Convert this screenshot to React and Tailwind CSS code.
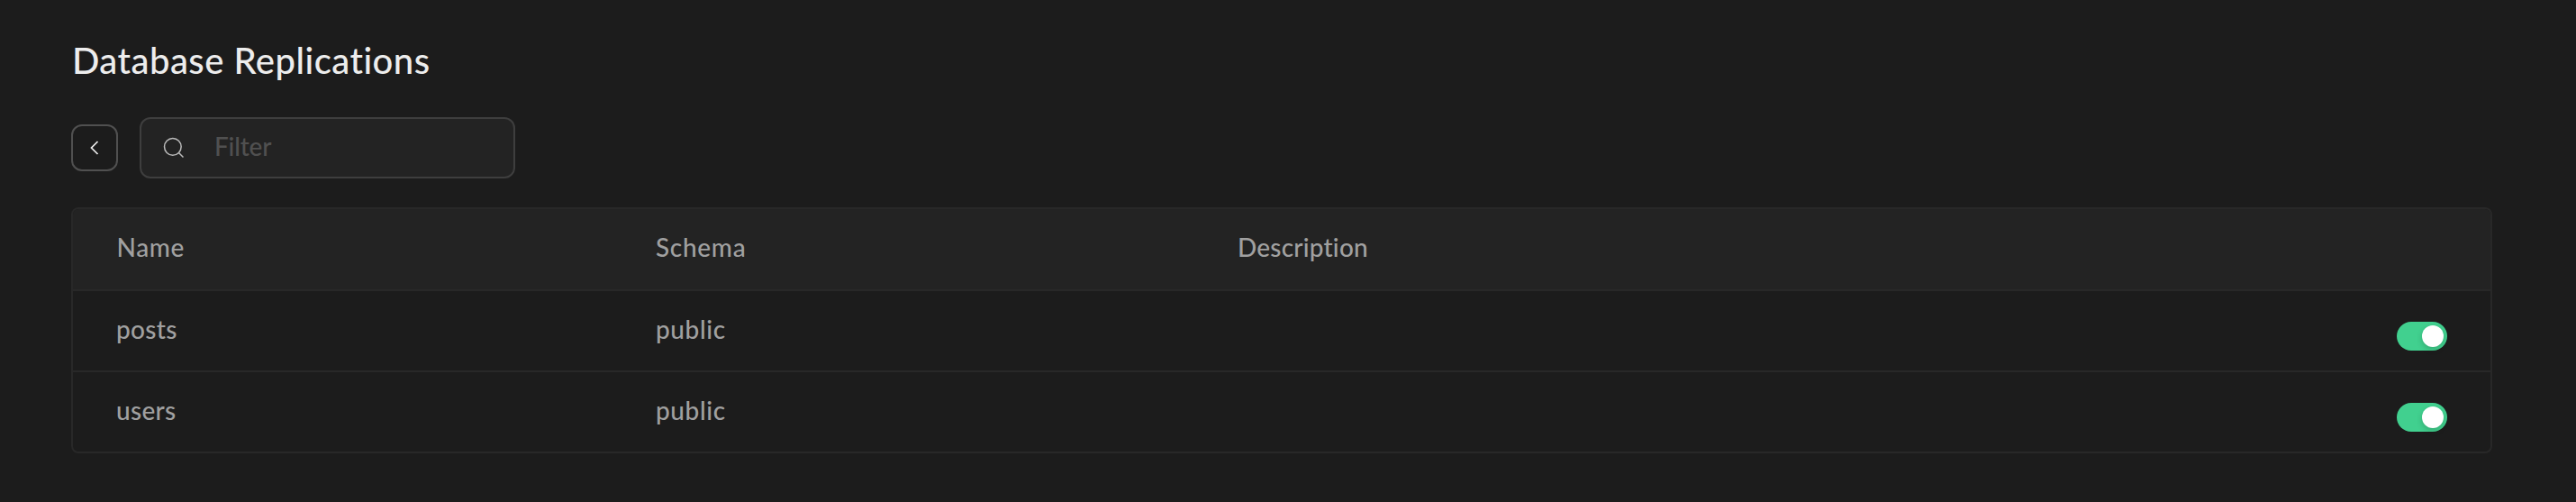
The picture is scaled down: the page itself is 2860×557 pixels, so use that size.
const rows = [
  { name: "posts", schema: "public" },
  { name: "users", schema: "public" },
];

const columns = "grid grid-cols-[598px_646px_1fr_56px] px-12";

function Toggle() {
  return (
    <button
      type="button"
      role="switch"
      aria-checked="true"
      className="mt-[34px] flex h-8 w-14 items-center justify-end rounded-full bg-[#41d08f] px-1"
    >
      <span className="size-6 rounded-full bg-white shadow-[0_3px_6px_rgba(0,35,11,0.2)]" />
    </button>
  );
}

export default function App() {
  return (
    <div className="h-[557px] w-full overflow-hidden bg-[#1c1c1c] pl-[79px] pr-[93px] pt-[43px] font-['Lato',sans-serif] font-medium text-[#a0a0a0]">
      <h3 className="h-12 pl-px text-[40px] leading-[48px] tracking-[0.47px] text-[#ededed]">
        Database Replications
      </h3>
      <div className="mt-[39px] flex h-[68px] items-center gap-6">
        <button
          type="button"
          className="flex size-[52px] items-center justify-center rounded-xl border-2 border-[#505050] text-[#ededed]"
        >
          <svg className="size-7" viewBox="0 0 24 24" fill="none" stroke="currentColor" strokeWidth="1.5">
            <path d="M15 18l-6-6 6-6" />
          </svg>
        </button>
        <div className="flex h-[68px] w-[417px] items-center rounded-xl border-2 border-[#3e3e3e] bg-[#232323] pl-[22px]">
          <svg className="size-7" viewBox="0 0 24 24" fill="none" stroke="#bbbbbb" strokeWidth="1.3">
            <circle cx="11" cy="11" r="8" />
            <path d="M21 21l-4.35-4.35" />
          </svg>
          <span className="mb-1 ml-[31px] text-[28px] leading-10 tracking-[-0.2px] text-[#505050]">Filter</span>
        </div>
      </div>
      <div className="mt-8 h-[273px] overflow-hidden rounded-lg border-2 border-[#282828] text-[28px] leading-10">
        <div className={`${columns} h-[91px] border-b-2 border-[#282828] bg-[#232323] pt-[22px]`}>
          <span className="pl-[0.5px] tracking-[0.6px]">Name</span>
          <span className="pl-px tracking-[0.7px]">Schema</span>
          <span className="pl-px tracking-[0.2px]">Description</span>
        </div>
        {rows.map((row, i) => (
          <div
            key={row.name}
            className={`${columns} ${i === 0 ? "h-[90px] border-b-2 border-[#282828]" : "h-[88px]"}`}
          >
            <span className="pt-[22px] tracking-[0.3px]">{row.name}</span>
            <span className="pl-px pt-[22px] tracking-[0.6px]">{row.schema}</span>
            <span />
            <Toggle />
          </div>
        ))}
      </div>
    </div>
  );
}
